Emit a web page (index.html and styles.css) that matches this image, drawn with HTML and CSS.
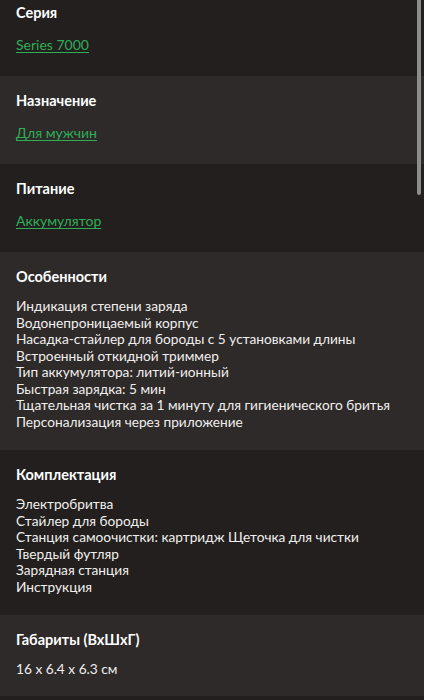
FILE: index.html
```html
<!DOCTYPE html>
<html lang="ru">
<head>
<meta charset="utf-8">
<link rel="stylesheet" href="styles.css">
</head>
<body>
<div class="page">
  <section class="spec spec-dark">
    <h3 class="spec-title">Серия</h3>
    <a class="spec-link" href="#">Series 7000</a>
  </section>
  <section class="spec spec-light">
    <h3 class="spec-title">Назначение</h3>
    <a class="spec-link" href="#">Для мужчин</a>
  </section>
  <section class="spec spec-dark">
    <h3 class="spec-title">Питание</h3>
    <a class="spec-link" href="#">Аккумулятор</a>
  </section>
  <section class="spec spec-light">
    <h3 class="spec-title">Особенности</h3>
    <ul class="spec-list">
      <li>Индикация степени заряда</li>
      <li>Водонепроницаемый корпус</li>
      <li>Насадка-стайлер для бороды с 5 установками длины</li>
      <li>Встроенный откидной триммер</li>
      <li>Тип аккумулятора: литий-ионный</li>
      <li>Быстрая зарядка: 5 мин</li>
      <li>Тщательная чистка за 1 минуту для гигиенического бритья</li>
      <li>Персонализация через приложение</li>
    </ul>
  </section>
  <section class="spec spec-dark">
    <h3 class="spec-title">Комплектация</h3>
    <ul class="spec-list">
      <li>Электробритва</li>
      <li>Стайлер для бороды</li>
      <li>Станция самоочистки: картридж Щеточка для чистки</li>
      <li>Твердый футляр</li>
      <li>Зарядная станция</li>
      <li>Инструкция</li>
    </ul>
  </section>
  <section class="spec spec-light spec-short">
    <h3 class="spec-title">Габариты (ВхШхГ)</h3>
    <ul class="spec-list">
      <li>16 x 6.4 x 6.3 см</li>
    </ul>
  </section>
</div>
<div class="scrollbar"><div class="scrollbar-thumb"></div></div>
</body>
</html>
```
FILE: styles.css
```css
html, body {
  margin: 0;
  padding: 0;
  background: #221f1e;
  height: 700px;
  overflow: hidden;
}
body {
  font-family: Lato, "Noto Sans", sans-serif;
  color: #f1efee;
}
.page {
  display: flex;
  flex-direction: column;
  margin-top: -12px;
}
.spec {
  padding: 16px 16px 20px;
}
.spec-short {
  padding-bottom: 18px;
}
.spec-dark { background: #221f1e; }
.spec-light { background: #2d2a29; }
.spec-title {
  margin: 0 0 12px;
  font-size: 14.5px;
  line-height: 18px;
  font-weight: 700;
  color: #ffffff;
}
.spec-link {
  display: inline-block;
  font-size: 14px;
  line-height: 22px;
  color: #2fae58;
  text-decoration: underline;
  text-underline-offset: 2px;
}
.spec-list {
  list-style: none;
  margin: 0;
  padding: 0;
  font-size: 13.7px;
  line-height: 16.5px;
}
.scrollbar {
  position: fixed;
  top: 0;
  right: 0;
  width: 10px;
  height: 700px;
}
.scrollbar-thumb {
  position: absolute;
  top: 0;
  right: 3px;
  width: 4px;
  height: 195px;
  border-radius: 0 0 2px 2px;
  background: #8e8c8b;
}
```
